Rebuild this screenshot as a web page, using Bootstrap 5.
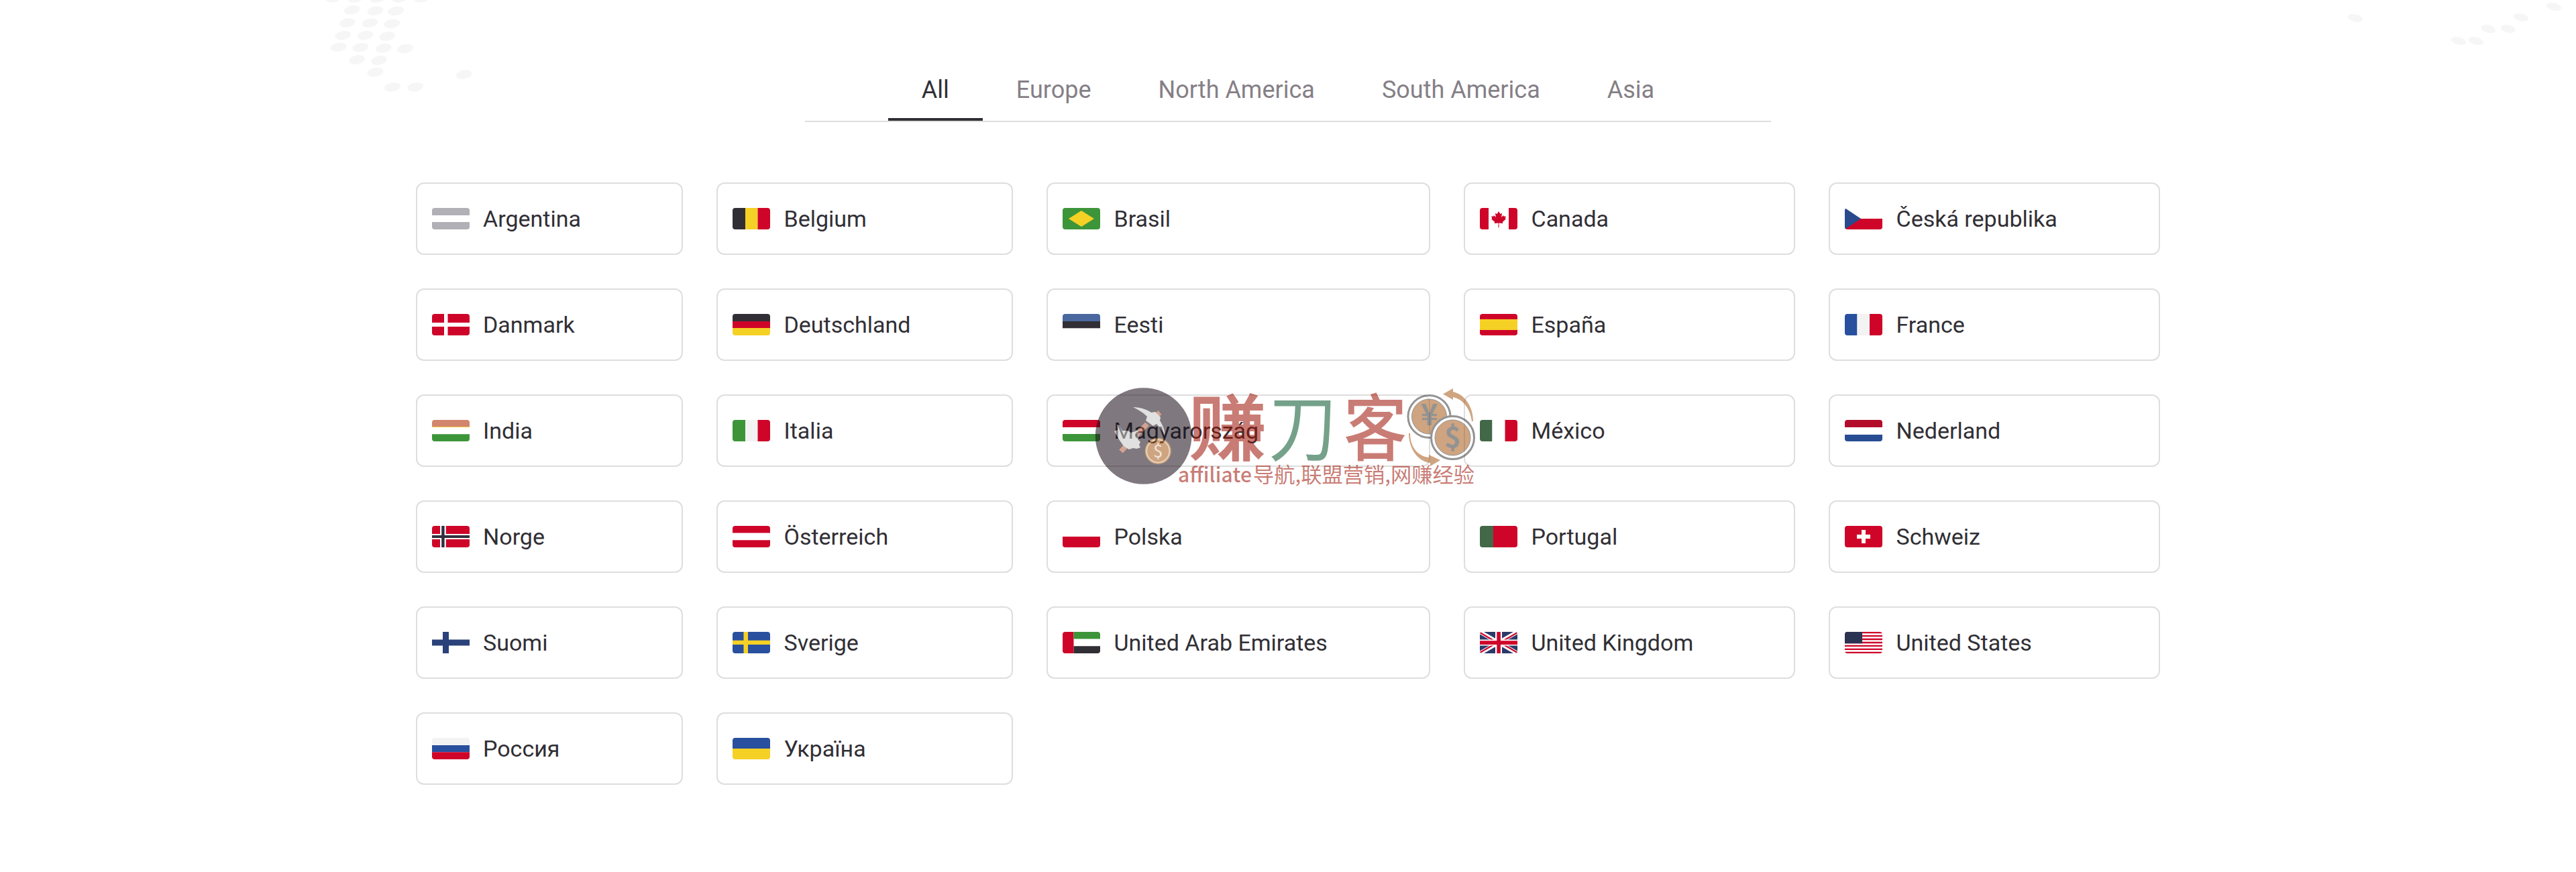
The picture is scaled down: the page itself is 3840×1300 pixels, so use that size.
<!DOCTYPE html>
<html lang="en">
<head>
<meta charset="utf-8">
<title>Countries</title>
<link rel="stylesheet" href="https://cdn.jsdelivr.net/npm/bootstrap@5.3.0/dist/css/bootstrap.min.css">
<style>
body{font-family:Roboto,"Liberation Sans",sans-serif;color:#312f35;background:#fff;width:3840px;height:1300px;overflow:hidden}
.region-tabs{width:1440px;height:182px;padding-top:86px;border-bottom:2px solid #dedede;--bs-nav-link-color:#857f86}
.region-tabs .nav-link{font-size:36px;line-height:48px;padding:24px 50px 0;height:94px;color:#857f86;border-bottom:4px solid transparent}
.region-tabs .nav-link.active{color:#312f35;border-bottom-color:#312f35}
.country-grid{display:grid;grid-template-columns:398px 442px 572px 494px 494px;gap:50px;width:2600px;margin-top:90px}
.country{height:108px;border:2px solid #dedede;border-radius:12px;padding:0 22px;font-size:34px;color:#312f35;background:#fff;gap:20px}
.country svg{width:56px;height:32px;border-radius:4px;flex:none}
.country span{line-height:40px}
.country:not(:nth-child(5n+1)) span{padding-left:.5px}
.deco{left:0;top:0;z-index:-1}
.stamp{left:1620px;top:500px;opacity:.55;pointer-events:none}
.cjk{font-family:"Noto Sans CJK SC",sans-serif}
</style>
<script src="https://cdn.jsdelivr.net/npm/bootstrap@5.3.0/dist/js/bootstrap.bundle.min.js"></script>
</head>
<body class="position-relative">
<svg class="deco position-absolute" width="3840" height="150" fill="#f6f6f6">
<defs><ellipse id="dl" rx="12" ry="6.6" transform="rotate(-9)"/><ellipse id="dr" rx="11.3" ry="5.6" transform="rotate(13)"/></defs>
<use href="#dl" x="497" y="-3"/><use href="#dl" x="530" y="-3"/><use href="#dl" x="563" y="-3"/><use href="#dl" x="596" y="-3"/><use href="#dl" x="629" y="-3"/>
<use href="#dl" x="524.5" y="14.7"/><use href="#dl" x="559.5" y="16"/><use href="#dl" x="590.3" y="16.3"/>
<use href="#dl" x="517.7" y="34"/><use href="#dl" x="551.3" y="34"/><use href="#dl" x="584.3" y="35.3"/>
<use href="#dl" x="511" y="52.7"/><use href="#dl" x="544.7" y="52.7"/><use href="#dl" x="577.3" y="54"/>
<use href="#dl" x="504.7" y="70.3"/><use href="#dl" x="537.3" y="70.7"/><use href="#dl" x="571.7" y="71.7"/><use href="#dl" x="604" y="72.5"/>
<use href="#dl" x="532" y="89"/><use href="#dl" x="565" y="90"/><use href="#dl" x="559.3" y="107.7"/><use href="#dl" x="691.7" y="111"/>
<use href="#dl" x="585" y="129.7"/><use href="#dl" x="619" y="129.7"/>
<use href="#dr" x="3511" y="26.7"/><use href="#dr" x="3665" y="61"/><use href="#dr" x="3691" y="61"/><use href="#dr" x="3709.3" y="43"/><use href="#dr" x="3738.7" y="43"/><use href="#dr" x="3758" y="26"/><use href="#dr" x="3807" y="10"/>
</svg>

<nav class="nav region-tabs mx-auto justify-content-center flex-nowrap">
<a class="nav-link active">All</a><a class="nav-link">Europe</a><a class="nav-link">North America</a><a class="nav-link">South America</a><a class="nav-link">Asia</a>
</nav>

<main class="country-grid mx-auto">
<a class="card country flex-row align-items-center text-decoration-none"><svg viewBox="0 0 56 32"><path fill="#b1b0b6" d="M0 0h56v11H0zM0 21h56v11H0z"/></svg><span>Argentina</span></a>
<a class="card country flex-row align-items-center text-decoration-none"><svg viewBox="0 0 56 32"><path fill="#312f35" d="M0 0h19v32H0z"/><path fill="#f5d025" d="M19 0h18.500v32H19z"/><path fill="#ce0529" d="M37.500 0H56v32H37.500z"/></svg><span>Belgium</span></a>
<a class="card country flex-row align-items-center text-decoration-none"><svg viewBox="0 0 56 32"><path fill="#3d9539" d="M0 0h56v32H0z"/><path fill="#f5d025" d="M28 4l19 12-19 12L9 16z"/></svg><span>Brasil</span></a>
<a class="card country flex-row align-items-center text-decoration-none"><svg viewBox="0 0 56 32"><path fill="#fff" d="M0 0h56v32H0z"/><path fill="#ce0529" d="M0 0h13v32H0zM43 0h13v32H43zM28 5l2.400 4 2.600-1.300-.8 6 3-2.600.6 1.600 3-.4-1 3.200 1 1-5 4.500.6 2-6-.6.200 6.600h-1.200l.200-6.600-6 .6.6-2-5-4.500 1-1-1-3.200 3 .4.6-1.600 3 2.600-.8-6 2.600 1.300z"/></svg><span>Canada</span></a>
<a class="card country flex-row align-items-center text-decoration-none"><svg viewBox="0 0 56 32"><path fill="#fff" d="M0 0h56v16H0z"/><path fill="#ce0529" d="M0 16h56v16H0z"/><path fill="#294a8c" d="M0 0l24 16L0 32z"/></svg><span>Česká republika</span></a>

<a class="card country flex-row align-items-center text-decoration-none"><svg viewBox="0 0 56 32"><path fill="#ce0529" d="M0 0h56v32H0z"/><path fill="#fff" d="M18 0h5.500v32H18zM0 13h56v6H0z"/></svg><span>Danmark</span></a>
<a class="card country flex-row align-items-center text-decoration-none"><svg viewBox="0 0 56 32"><path fill="#312f35" d="M0 0h56v11H0z"/><path fill="#ce0529" d="M0 11h56v10H0z"/><path fill="#f5d025" d="M0 21h56v11H0z"/></svg><span>Deutschland</span></a>
<a class="card country flex-row align-items-center text-decoration-none"><svg viewBox="0 0 56 32"><path fill="#49689f" d="M0 0h56v11H0z"/><path fill="#312f35" d="M0 11h56v10H0z"/><path fill="#b1b0b6" d="M0 21h56v.8H0z"/></svg><span>Eesti</span></a>
<a class="card country flex-row align-items-center text-decoration-none"><svg viewBox="0 0 56 32"><path fill="#ce0529" d="M0 0h56v32H0z"/><path fill="#f5d025" d="M0 8h56v16H0z"/></svg><span>España</span></a>
<a class="card country flex-row align-items-center text-decoration-none"><svg viewBox="0 0 56 32"><path fill="#29509e" d="M0 0h18.500v32H0z"/><path fill="#f3f3f3" d="M18.500 0H37v32H18.500z"/><path fill="#ce0529" d="M37 0h19v32H37z"/></svg><span>France</span></a>

<a class="card country flex-row align-items-center text-decoration-none"><svg viewBox="0 0 56 32"><path fill="#d2866e" d="M0 0h56v10H0z"/><path fill="#f5c735" d="M0 10h56v1H0z"/><path fill="#3d9539" d="M0 21.300h56V32H0z"/></svg><span>India</span></a>
<a class="card country flex-row align-items-center text-decoration-none"><svg viewBox="0 0 56 32"><path fill="#3d9539" d="M0 0h19v32H0z"/><path fill="#f3f3f3" d="M19 0h18.500v32H19z"/><path fill="#ce0529" d="M37.500 0H56v32H37.500z"/></svg><span>Italia</span></a>
<a class="card country flex-row align-items-center text-decoration-none"><svg viewBox="0 0 56 32"><path fill="#ce0529" d="M0 0h56v11H0z"/><path fill="#fff" d="M0 11h56v10H0z"/><path fill="#3d9539" d="M0 21h56v11H0z"/></svg><span>Magyarország</span></a>
<a class="card country flex-row align-items-center text-decoration-none"><svg viewBox="0 0 56 32"><path fill="#426847" d="M0 0h18.500v32H0z"/><path fill="#fff" d="M18.500 0H37v32H18.500z"/><path fill="#ce0529" d="M37.500 0H56v32H37.500z"/></svg><span>México</span></a>
<a class="card country flex-row align-items-center text-decoration-none"><svg viewBox="0 0 56 32"><path fill="#b30c2b" d="M0 0h56v11H0z"/><path fill="#294d93" d="M0 22h56v10H0z"/></svg><span>Nederland</span></a>

<a class="card country flex-row align-items-center text-decoration-none"><svg viewBox="0 0 56 32"><path fill="#ce0529" d="M0 0h56v32H0z"/><path fill="#fff" d="M12 0h8.800v32H12zM0 12h56v8H0z"/><path fill="#312f3d" d="M14.200 0h4.400v32h-4.400zM0 14h56v4H0z"/></svg><span>Norge</span></a>
<a class="card country flex-row align-items-center text-decoration-none"><svg viewBox="0 0 56 32"><path fill="#ce0529" d="M0 0h56v10.600H0zM0 21.300h56V32H0z"/></svg><span>Österreich</span></a>
<a class="card country flex-row align-items-center text-decoration-none"><svg viewBox="0 0 56 32"><path fill="#ce0529" d="M0 16h56v16H0z"/></svg><span>Polska</span></a>
<a class="card country flex-row align-items-center text-decoration-none"><svg viewBox="0 0 56 32"><path fill="#426847" d="M0 0h20v32H0z"/><path fill="#ce0529" d="M20 0h36v32H20z"/></svg><span>Portugal</span></a>
<a class="card country flex-row align-items-center text-decoration-none"><svg viewBox="0 0 56 32"><path fill="#ce0529" d="M0 0h56v32H0z"/><path fill="#fff" d="M25 6h6v20h-6zM18 13h20v6H18z"/></svg><span>Schweiz</span></a>

<a class="card country flex-row align-items-center text-decoration-none"><svg viewBox="0 0 56 32"><path fill="#2a417a" d="M16 0h9v32h-9zM0 11.500h56v9H0z"/></svg><span>Suomi</span></a>
<a class="card country flex-row align-items-center text-decoration-none"><svg viewBox="0 0 56 32"><path fill="#29509e" d="M0 0h56v32H0z"/><path fill="#f5d025" d="M16.500 0H23v32h-6.500zM0 12.700h56v6.300H0z"/></svg><span>Sverige</span></a>
<a class="card country flex-row align-items-center text-decoration-none"><svg viewBox="0 0 56 32"><path fill="#fff" d="M0 0h56v32H0z"/><path fill="#ce0529" d="M0 0h16.500v32H0z"/><path fill="#3d9539" d="M16.500 0H56v10.600H16.500z"/><path fill="#312f35" d="M16.500 21.300H56V32H16.500z"/></svg><span>United Arab Emirates</span></a>
<a class="card country flex-row align-items-center text-decoration-none"><svg viewBox="0 0 56 32"><path fill="#2b3a68" d="M0 0h56v32H0z"/><path stroke="#fff" stroke-width="6" d="M0 0l56 32M56 0L0 32"/><path stroke="#ce0529" stroke-width="2.200" d="M0 1l24 14M56 1L32 15M0 31l24-14M56 31L32 17"/><path fill="#fff" d="M23 0h10v32H23zM0 11.500h56v9H0z"/><path fill="#ce0529" d="M25.300 0h5.600v32h-5.600zM0 13.300h56v5.600H0z"/></svg><span>United Kingdom</span></a>
<a class="card country flex-row align-items-center text-decoration-none"><svg viewBox="0 0 56 32"><path fill="#fff" d="M0 0h56v32H0z"/><path stroke="#ce0529" stroke-width="2.300" d="M0 1.200h56M0 6.100h56M0 11h56M0 16h56M0 20.900h56M0 25.800h56M0 30.800h56"/><path fill="#2b3353" d="M0 0h26v17.300H0z"/></svg><span>United States</span></a>

<a class="card country flex-row align-items-center text-decoration-none"><svg viewBox="0 0 56 32"><path fill="#f3f3f3" d="M0 0h56v11H0z"/><path fill="#29509e" d="M0 11h56v10.300H0z"/><path fill="#ce0529" d="M0 21.300h56V32H0z"/></svg><span>Россия</span></a>
<a class="card country flex-row align-items-center text-decoration-none"><svg viewBox="0 0 56 32"><path fill="#29509e" d="M0 0h56v16H0z"/><path fill="#f5d025" d="M0 16h56v16H0z"/></svg><span>Україна</span></a>
</main>

<svg class="stamp position-absolute" width="600" height="300" viewBox="0 -60 600 300">
<circle cx="84.600" cy="90" r="71.800" fill="#180d18"/>
<!-- pickaxe -->
<path d="M51 113L90 72M98 64L109 55" stroke="#b05a3a" stroke-width="7.500"/>
<path fill="#c8c8c8" d="M69 47c12 0 21 4 27 8l6-1 8 8-1 5c5 8 8 16 7 23-3-8-7-13-12-18l-5 3-11-8 2-6c-6-6-13-10-21-14z"/>
<!-- hand -->
<path fill="#c8c8c8" d="M41 83l5-2-1-8 4 1 4 8 8 0 5 3 10-3 2 3-5 4 5 2-2 4 4 4-2 4 2 4-5 2-6-1-6 2-8-5-7-10z"/>
<circle cx="106.300" cy="112.500" r="19.500" fill="#a95b1a"/><circle cx="106.300" cy="112.500" r="17" fill="none" stroke="#e0c8a0" stroke-width="1.500"/>
<text x="106.300" y="122" font-size="26" text-anchor="middle" fill="#e0d4c0" class="cjk">$</text>
<g class="cjk" font-size="112" font-weight="700" fill="#9e1205">
<text transform="translate(152 118) scale(1.040 .96)">赚</text><text transform="translate(271 119) scale(.91 .99)" fill="#05562c" font-weight="400">刀</text><text transform="translate(383 118) scale(.84 .96)" font-weight="500">客</text></g>
<text class="cjk" x="136" y="159" font-size="30" font-weight="500" fill="#9e1205" textLength="110" lengthAdjust="spacing">affiliate</text>
<text class="cjk" x="248" y="159" font-size="31" font-weight="400" fill="#9e1205" textLength="330" lengthAdjust="spacingAndGlyphs">导航,联盟营销,网赚经验</text>
<circle cx="510.500" cy="61" r="31.500" fill="#fff" stroke="#3c3c3c" stroke-width="3"/><circle cx="510.500" cy="61" r="26" fill="#a95b1a" stroke="#3c3c3c"/>
<text x="510.500" y="74" font-size="44" font-weight="700" text-anchor="middle" fill="#3c3c3c" class="cjk">¥</text>
<circle cx="545.500" cy="92.500" r="32" fill="#fff" stroke="#3c3c3c" stroke-width="3"/><circle cx="545.500" cy="92.500" r="26.500" fill="#a95b1a" stroke="#3c3c3c"/>
<text x="545.500" y="107" font-size="42" font-weight="700" text-anchor="middle" fill="#3c3c3c" class="cjk">$</text>
<path fill="#a95b1a" d="M531 27.500l15-8.500v5c18 4 30 23 30 44h-2c-2-18-13-33-28-36v4zM482 86c0 20 11 34 28 36v-4l17 8-15 9v-5c-19-2-32-22-32-44z"/>
</svg>
</body>
</html>
